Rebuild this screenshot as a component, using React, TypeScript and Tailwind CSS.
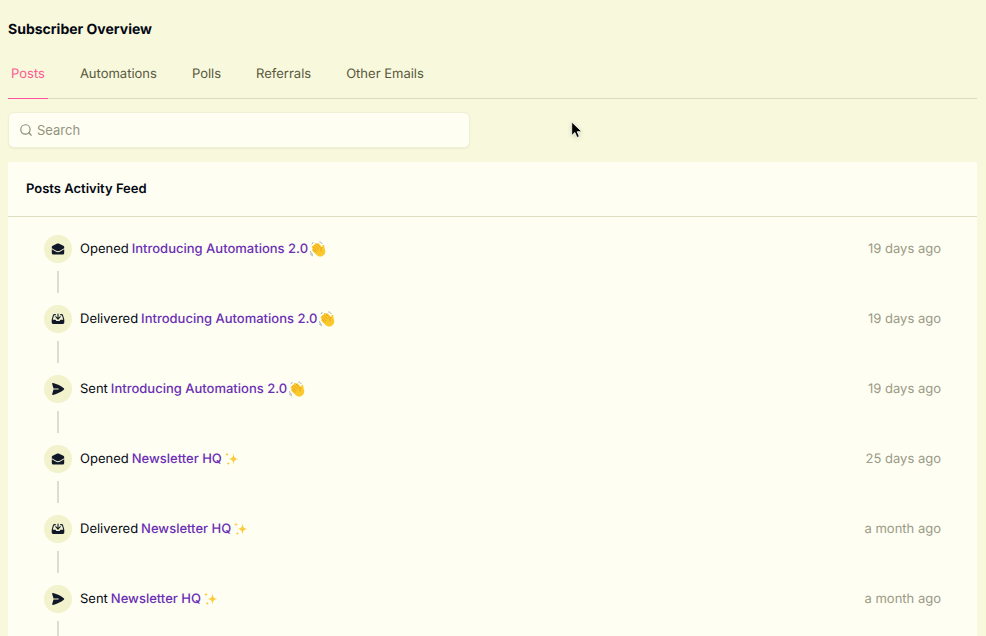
import React from 'react';
import { Search } from 'lucide-react';
import { HiMiniInboxArrowDown } from 'react-icons/hi2';

type ActivityKind = 'Opened' | 'Delivered' | 'Sent';

interface Activity {
  id: number;
  kind: ActivityKind;
  title: string;
  emoji: 'wave' | 'sparkles';
  when: string;
}

const TABS = ['Posts', 'Automations', 'Polls', 'Referrals', 'Other Emails'];

const ACTIVITIES: Activity[] = [
  { id: 1, kind: 'Opened', title: 'Introducing Automations 2.0', emoji: 'wave', when: '19 days ago' },
  { id: 2, kind: 'Delivered', title: 'Introducing Automations 2.0', emoji: 'wave', when: '19 days ago' },
  { id: 3, kind: 'Sent', title: 'Introducing Automations 2.0', emoji: 'wave', when: '19 days ago' },
  { id: 4, kind: 'Opened', title: 'Newsletter HQ', emoji: 'sparkles', when: '25 days ago' },
  { id: 5, kind: 'Delivered', title: 'Newsletter HQ', emoji: 'sparkles', when: 'a month ago' },
  { id: 6, kind: 'Sent', title: 'Newsletter HQ', emoji: 'sparkles', when: 'a month ago' },
];

function OpenedIcon() {
  return (
    <svg viewBox="0 0 14 14" className="size-3.5" fill="currentColor" aria-hidden="true">
      <path d="M6.300 1.600a1.500 1.500 0 0 1 1.400 0l4.600 2.100c.6.300.9.800.9 1.400v1.200L8.800 8.800a3.800 3.800 0 0 1-3.600 0L.8 6.300V5.100c0-.6.3-1.100.9-1.400z" />
      <path d="M.8 7.300l3.900 2.200a4.800 4.800 0 0 0 4.600 0l3.900-2.200v3.700a1.500 1.500 0 0 1-1.500 1.500H2.300A1.500 1.500 0 0 1 .8 11z" />
    </svg>
  );
}

function SentIcon() {
  return (
    <svg viewBox="0 0 14 14" className="size-3.5" fill="currentColor" aria-hidden="true">
      <path d="M1.200 2c-.2-.6.3-1.100.9-.9 4.100 1.100 7.700 2.800 10.700 5.200.5.400.5 1 0 1.400-3 2.400-6.600 4.100-10.700 5.200-.6.200-1.100-.3-.9-.9L2.500 7.500H7.600V6.500H2.500z" />
    </svg>
  );
}

function ActivityIcon({ kind }: { kind: ActivityKind }) {
  switch (kind) {
    case 'Opened':
      return <OpenedIcon />;
    case 'Delivered':
      return <HiMiniInboxArrowDown className="size-3.5" aria-hidden="true" />;
    default:
      return <SentIcon />;
  }
}

function WaveIcon() {
  return (
    <svg viewBox="0 0 16 16" className="size-4 shrink-0" role="img" aria-label="waving hand">
      <path
        d="M3.300 4.200c.5-.5 1.100-.4 1.600.1L4.700 2.700c.4-.8 1.200-.9 1.800-.3l.5.500c.3-.9 1.200-1 1.900-.3l3.200 3.700.4-2c.2-.8 1.400-.9 1.700 0 .2.600.1 1.300.2 2.100l.8 3.200c.4 2.500-1 4.800-3.200 5.600-1.900.7-3.800.3-5.100-1L2.500 9.900c-.6-.7-.2-1.500.5-1.600L1.900 7c-.5-.7 0-1.500.8-1.500z"
        fill="#fbc92c"
      />
      <path
        d="M4.900 4.300l3.600 3.900M7 2.900l3.400 4M3 5.600l4 4.100M3 8.300l3 3M12.100 6.300c-1.200 1-1.600 2.300-.9 3.900"
        fill="none"
        stroke="#dc9416"
        strokeWidth="0.7"
        strokeLinecap="round"
      />
      <path
        d="M9.800 1c1 .1 1.700.6 2.100 1.400M.6 10.600c.1 1.300.7 2.200 1.900 2.700M.6 13.100c.4.900 1 1.400 1.800 1.600M2.100 2.800l1-1.300"
        fill="none"
        stroke="#9c9ca6"
        strokeWidth="0.9"
        strokeLinecap="round"
      />
    </svg>
  );
}

function SparklesIcon() {
  return (
    <svg viewBox="0 0 16 16" className="size-4 shrink-0" role="img" aria-label="sparkles" fill="#fbcb3c">
      <path d="M9.500 2.500c.5 3.800 1.300 4.900 5 5.500-3.700.6-4.500 1.700-5 5.500-.5-3.800-1.300-4.900-5-5.500 3.700-.6 4.500-1.700 5-5.500z" />
      <path d="M3 1.200c.2 1.500.6 2 2 2.200-1.400.2-1.800.7-2 2.200-.2-1.500-.6-2-2-2.200 1.400-.2 1.800-.7 2-2.200z" />
      <path d="M4.300 10.400c.2 1.400.5 1.800 1.800 2-1.300.2-1.600.6-1.800 2-.2-1.400-.5-1.800-1.800-2 1.300-.2 1.600-.6 1.800-2z" />
    </svg>
  );
}

function ActivityRow({ activity }: { activity: Activity }) {
  return (
    <li>
      <div className="flex h-7 items-center">
        <span className="flex size-7 shrink-0 items-center justify-center rounded-full bg-[#f2f2cd] text-gray-900">
          <ActivityIcon kind={activity.kind} />
        </span>
        <p className="ml-2 flex items-center gap-[3px] whitespace-nowrap text-gray-950">
          <span>{activity.kind}</span>
          <a href="#" className="flex items-center gap-0.5 font-medium text-[#6b2fb3]">
            {activity.title}
            {activity.emoji === 'wave' ? <WaveIcon /> : <SparklesIcon />}
          </a>
        </p>
        <time className="ml-auto text-[#9a9a85]">{activity.when}</time>
      </div>
      <div className="mt-2 mb-3 ml-[13px] h-[22px] w-0.5 bg-[#deded0]" />
    </li>
  );
}

export default function App() {
  return (
    <div className="min-h-screen bg-[#f8f8dc] pt-5 pr-[9px] pl-2 font-['Inter',sans-serif] text-[13px] leading-5 [text-rendering:geometricPrecision]">
      <h1 className="text-sm leading-5 font-bold text-gray-950">Subscriber Overview</h1>

      <nav className="mt-2 flex gap-[29px] border-b border-[#dadabc]">
        {TABS.map((tab) => (
          <a
            key={tab}
            href="#"
            className={
              tab === 'Posts'
                ? '-mb-px border-b border-[#ff4fa0] px-[3px] pt-4 pb-[14px] text-[#fb5c94]'
                : '-mb-px border-b border-transparent px-[3px] pt-4 pb-[14px] text-[#58583f]'
            }
          >
            {tab}
          </a>
        ))}
      </nav>

      <label className="mt-[13px] flex h-9 w-[462px] max-w-full items-center rounded-md border border-[#f0f0d4] bg-[#fefef3] px-[10px] shadow-xs">
        <Search className="size-3.5 shrink-0 text-[#8c8c78]" strokeWidth={2} aria-hidden="true" />
        <input
          type="search"
          aria-label="Search"
          placeholder="Search"
          className="ml-1 h-5 min-w-0 flex-1 bg-transparent outline-none placeholder:text-[#94947c]"
        />
      </label>

      <section className="mt-[14px] bg-[#fefef3]">
        <h2 className="border-b border-[#dedec0] px-[18px] py-[17px] font-semibold text-gray-950">
          Posts Activity Feed
        </h2>
        <ul className="px-9 pt-[18px]">
          {ACTIVITIES.map((activity) => (
            <ActivityRow key={activity.id} activity={activity} />
          ))}
        </ul>
      </section>

      {/* mouse pointer */}
      <svg
        viewBox="0 0 12 18"
        className="pointer-events-none absolute top-[121px] left-[571px] h-[18px] w-3 drop-shadow-sm"
        aria-hidden="true"
      >
        <path
          d="M.7 1v13.500l3.200-3 2.100 5 2.300-1-2.100-4.800h4.600z"
          fill="#000"
          stroke="#fff"
          strokeWidth="0.8"
        />
      </svg>
    </div>
  );
}
